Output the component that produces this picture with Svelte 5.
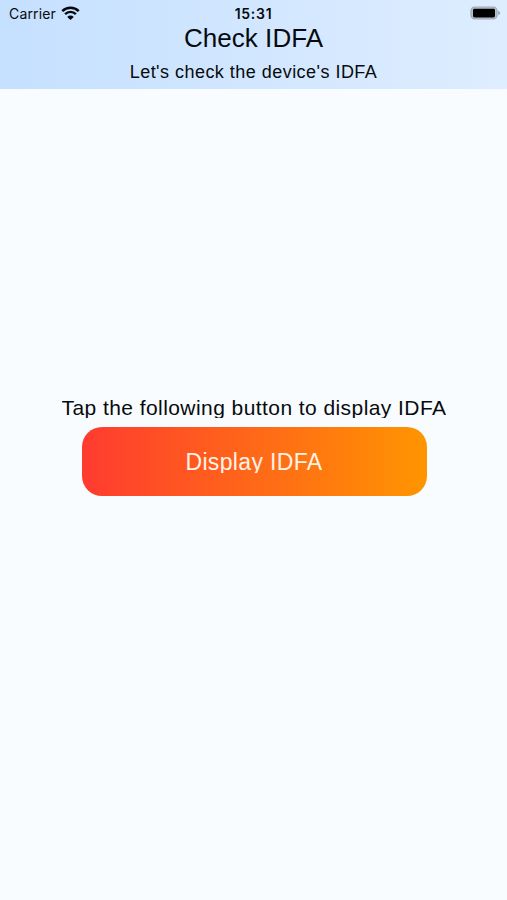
<script>
	let title = 'Check IDFA';
	let subtitle = "Let's check the device's IDFA";
	let time = '15:31';
</script>

<div class="screen">
	<header>
		<div class="status-bar">
			<div class="carrier">
				<span>Carrier</span>
				<svg class="wifi" viewBox="0 0 18 14">
					<path d="M1.2 4.7 A11.2 11.2 0 0 1 16.8 4.7" />
					<path d="M3.9 7.6 A7.2 7.2 0 0 1 14.1 7.6" />
					<path class="dot" d="M9 13.2 L5.9 10.2 A4.3 4.3 0 0 1 12.1 10.2 Z" />
				</svg>
			</div>
			<span class="time">{time}</span>
			<div class="battery">
				<svg viewBox="0 0 31 14">
					<rect class="shell" x="1" y="1" width="26" height="12" rx="3.8" />
					<rect x="3" y="2.8" width="22" height="8.6" rx="1.4" />
					<path class="tip" d="M28.2 4.8 Q30.2 5.6 30.2 7 Q30.2 8.4 28.2 9.2 Z" />
				</svg>
			</div>
		</div>
		<h1>{title}</h1>
		<p class="subtitle">{subtitle}</p>
	</header>

	<main>
		<p class="prompt">Tap the following button to display IDFA</p>
		<button><span>Display IDFA</span></button>
	</main>
</div>

<style>
	:global(body) {
		margin: 0;
		background: #f8fcff;
	}

	.screen {
		display: flex;
		flex-direction: column;
		height: 900px;
		background: #f8fcff;
		color: #080b0e;
		font-family: 'Liberation Sans', Arial, sans-serif;
	}

	header {
		box-sizing: border-box;
		height: 89px;
		background: linear-gradient(to right, #c5e0ff, #deedff);
		text-align: center;
	}

	.status-bar {
		display: grid;
		grid-template-columns: 1fr auto 1fr;
		align-items: center;
		height: 26px;
		padding: 0 6px 0 9px;
		font-family: Inter, sans-serif;
		font-size: 14px;
	}

	.carrier {
		display: flex;
		align-items: center;
		gap: 5px;
		letter-spacing: 0.15px;
	}

	.wifi {
		width: 19px;
		height: 15px;
	}

	.wifi path {
		fill: none;
		stroke: #05090d;
		stroke-width: 2.3;
	}

	.wifi .dot {
		fill: #05090d;
		stroke: none;
	}

	.time {
		margin-right: 3px;
		font-weight: 600;
		letter-spacing: 0.7px;
	}

	.battery {
		display: flex;
		justify-content: flex-end;
	}

	.battery svg {
		width: 31px;
		height: 14px;
	}

	.shell {
		fill: #b5c1ce;
		stroke: #9ca7b3;
		stroke-width: 1.2;
	}

	.tip {
		fill: #98a3af;
	}

	h1 {
		height: 28px;
		margin: 0;
		font-size: 26px;
		font-weight: 400;
		line-height: 25px;
		letter-spacing: 0.05px;
	}

	p {
		margin: 0;
	}

	.subtitle {
		height: 34px;
		font-size: 18px;
		line-height: 36px;
		letter-spacing: 0.47px;
	}

	main {
		display: flex;
		flex: 1;
		flex-direction: column;
		align-items: center;
		justify-content: center;
		gap: 9px;
		padding: 0 0 96px 1px;
	}

	/* the labels are shorter than their text, so descenders are cut */
	.prompt {
		height: 20px;
		overflow: hidden;
		font-size: 21px;
		line-height: 20px;
		letter-spacing: 0.43px;
		white-space: nowrap;
	}

	button {
		display: flex;
		align-items: center;
		justify-content: center;
		width: 345px;
		height: 69px;
		padding: 1px 0 0;
		border: none;
		border-radius: 20px;
		background: linear-gradient(to right, #ff3b30, #ff9500);
		color: #fff3e6;
		font-family: inherit;
		font-size: 23px;
		letter-spacing: 0.35px;
	}

	button span {
		height: 22px;
		overflow: hidden;
		line-height: 23px;
	}
</style>
